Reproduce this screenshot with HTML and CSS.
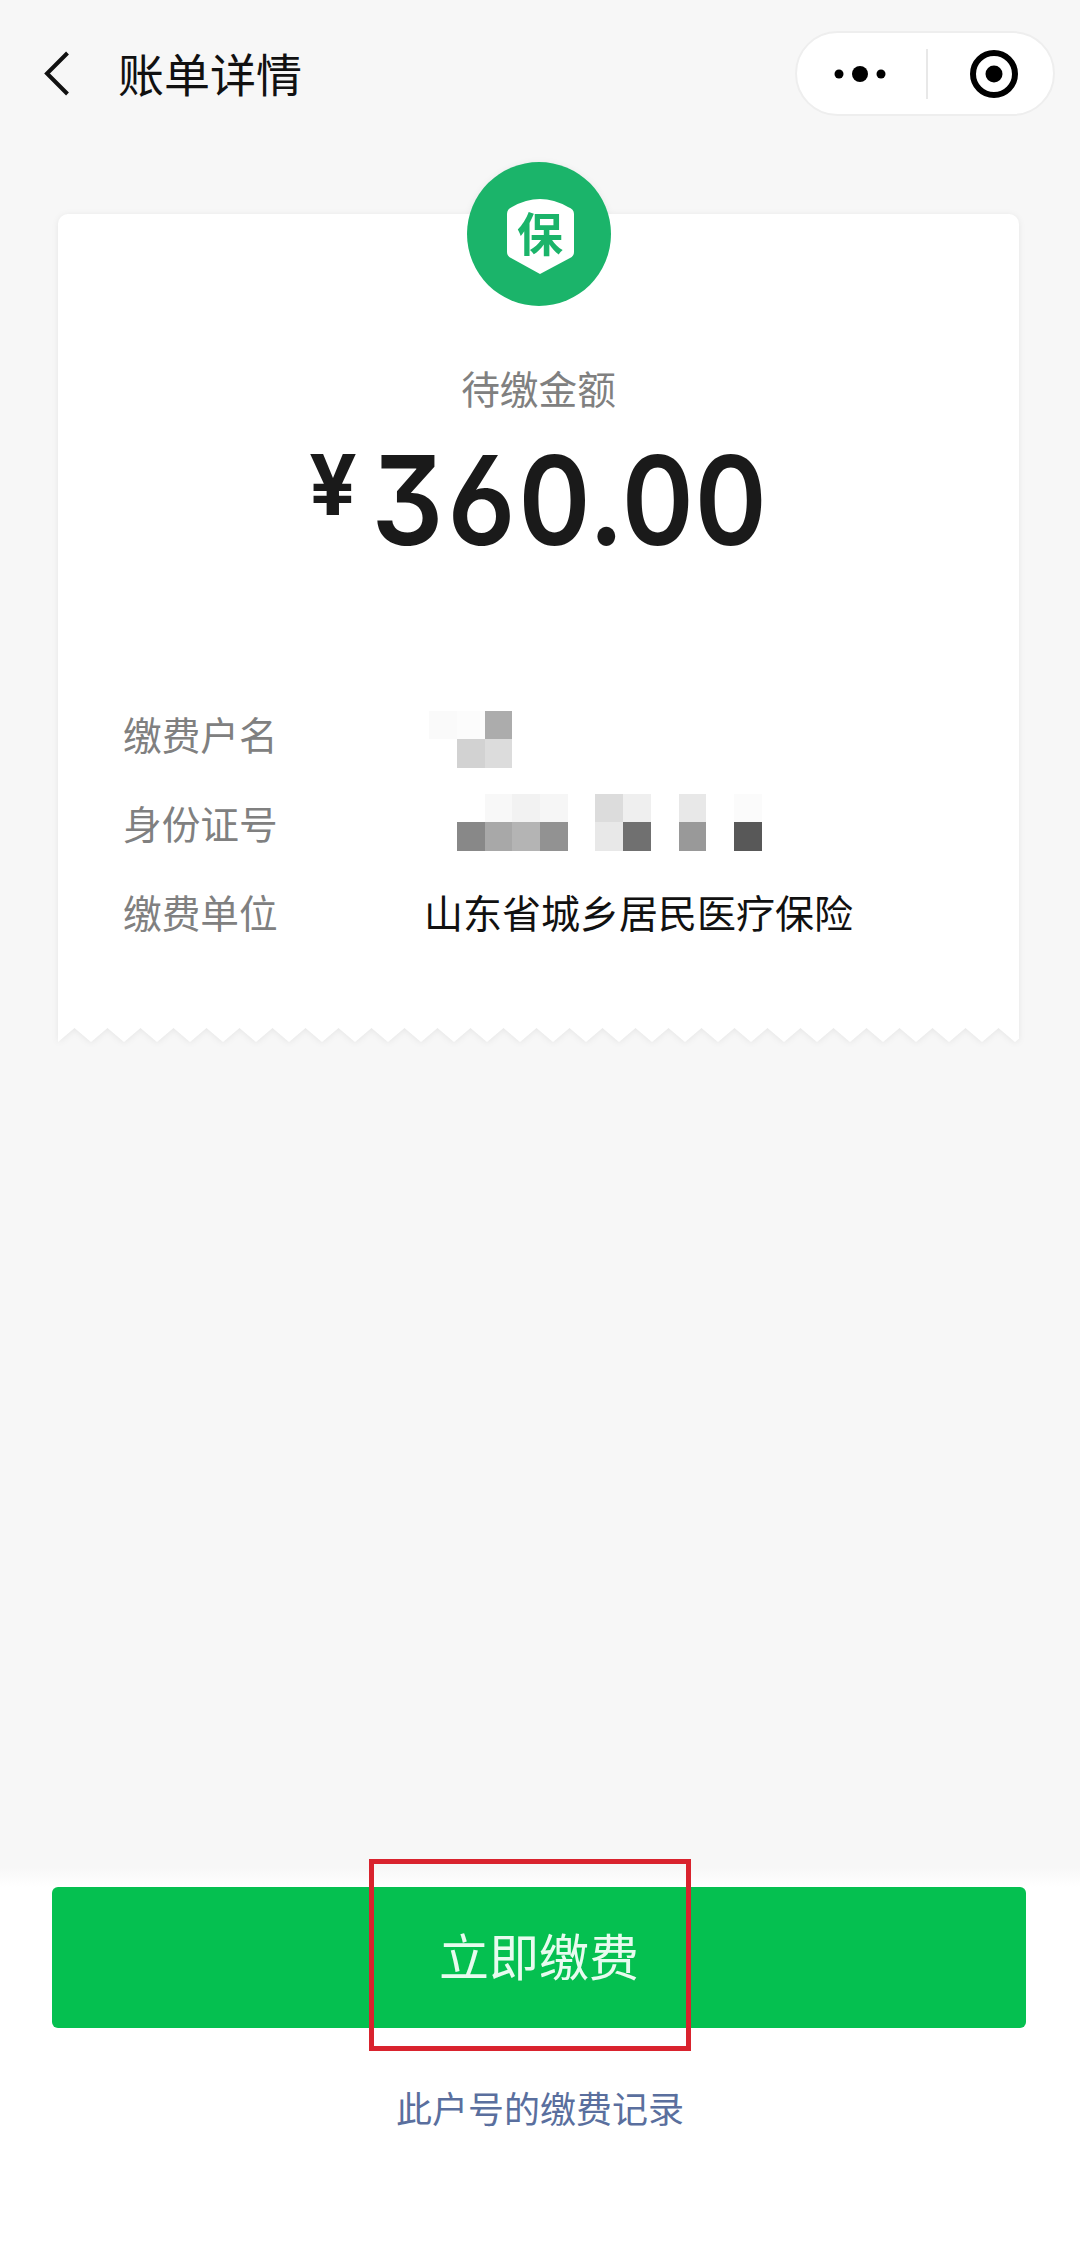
FILE: index.html
```html
<!DOCTYPE html>
<html lang="zh-CN">
<head>
<meta charset="utf-8">
<title>账单详情</title>
<link rel="stylesheet" href="styles.css">
</head>
<body>
<div class="page">
  <header class="nav">
    <svg class="back" width="26" height="45" viewBox="0 0 26 45"><path d="M23.5 2 L3 22.5 L23.5 43" fill="none" stroke="#111" stroke-width="4"/></svg>
    <h1 class="title">账单详情</h1>
    <div class="capsule">
      <svg class="dots" width="54" height="20" viewBox="0 0 54 20"><circle cx="5" cy="10" r="4.5"/><circle cx="26" cy="10" r="8"/><circle cx="47" cy="10" r="4.5"/></svg>
      <span class="capsule-line"></span>
      <svg class="target" width="50" height="50" viewBox="0 0 50 50"><circle cx="25" cy="25" r="21" fill="none" stroke="#000" stroke-width="6"/><circle cx="25" cy="25" r="8.5"/></svg>
    </div>
  </header>

  <main class="bill">
    <section class="card">
      <svg class="logo" width="144" height="144" viewBox="0 0 144 144">
        <circle cx="72" cy="72" r="72" fill="#1bb46a"/>
        <path d="M45 45 Q73 29 101 45 Q107 47 107 52 L107 90 Q107 94 103 96 L73 112 L44 96 Q40 94 40 90 L40 52 Q40 47 45 45 Z" fill="#fff"/>
        <text class="logo-char" x="73" y="89" text-anchor="middle">保</text>
      </svg>
      <div class="due-label">待缴金额</div>
      <div class="amount"><span class="currency">¥</span><span class="digits">360.00</span></div>
      <dl class="rows">
        <div class="row">
          <dt>缴费户名</dt>
          <dd>
            <svg class="mosaic mosaic-name" width="334" height="58" viewBox="0 0 334 58">
              <rect x="0" width="28" height="28" fill="#fafafa"/><rect x="28" width="28" height="28" fill="#fcfcfc"/><rect x="56" width="27" height="28" fill="#acacac"/>
              <rect x="28" y="28" width="28" height="29" fill="#d2d2d2"/><rect x="56" y="28" width="27" height="29" fill="#dcdcdc"/>
            </svg>
          </dd>
        </div>
        <div class="row">
          <dt>身份证号</dt>
          <dd>
            <svg class="mosaic mosaic-id" width="334" height="58" viewBox="0 0 334 58">
              <rect x="56" width="28" height="28" fill="#f8f8f8"/><rect x="83" width="28" height="28" fill="#f2f2f2"/><rect x="111" width="28" height="28" fill="#f6f6f6"/>
              <rect x="166" width="28" height="28" fill="#dcdcdc"/><rect x="194" width="28" height="28" fill="#efefef"/><rect x="250" width="27" height="28" fill="#e8e8e8"/><rect x="305" width="28" height="28" fill="#fbfbfb"/>
              <rect x="28" y="28" width="28" height="29" fill="#888"/><rect x="56" y="28" width="27" height="29" fill="#a8a8a8"/><rect x="83" y="28" width="28" height="29" fill="#b4b4b4"/><rect x="111" y="28" width="28" height="29" fill="#929292"/>
              <rect x="166" y="28" width="28" height="29" fill="#e8e8e8"/><rect x="194" y="28" width="28" height="29" fill="#707070"/><rect x="250" y="28" width="27" height="29" fill="#999"/><rect x="305" y="28" width="28" height="29" fill="#585858"/>
            </svg>
          </dd>
        </div>
        <div class="row">
          <dt>缴费单位</dt>
          <dd class="org">山东省城乡居民医疗保险</dd>
        </div>
      </dl>
    </section>
    <svg class="zigzag" width="961" height="16" viewBox="0 0 961 16">
      <defs><pattern id="tooth" width="33" height="16" patternUnits="userSpaceOnUse"><path d="M0 14 L16.5 0 L33 14 V0 H0 Z" fill="#fff"/></pattern></defs>
      <rect width="961" height="16" fill="url(#tooth)"/>
    </svg>
  </main>

  <footer class="footer">
    <div class="pay-wrap">
      <button class="pay" type="button">立即缴费</button>
      <span class="mark"></span>
    </div>
    <a class="history">此户号的缴费记录</a>
  </footer>
</div>
</body>
</html>
```

FILE: styles.css
```css
* { box-sizing: border-box; }
html, body { margin: 0; padding: 0; }
body { font-family: "Noto Sans CJK SC", "Noto Sans", sans-serif; background: #fff; }

.page {
  width: 1080px;
  height: 2253px;
  display: flex;
  flex-direction: column;
  background: #f7f7f7;
  overflow: hidden;
}

/* nav */
.nav {
  height: 146px;
  padding: 31px 25px 0 44px;
  display: flex;
  align-items: flex-start;
}
.back { margin-top: 20px; flex: none; }
.title {
  margin: 0 0 0 48px;
  font-size: 46px;
  font-weight: 400;
  line-height: 82px;
  color: #111;
  white-space: nowrap;
}
.capsule {
  margin-left: auto;
  width: 260px;
  height: 85px;
  border: 2px solid #eeeeee;
  border-radius: 43px;
  background: #fff;
  display: flex;
  align-items: center;
  padding-left: 37px;
}
.dots { flex: none; }
.capsule-line { width: 2px; height: 50px; background: #e8e8e8; margin-left: 38px; }
.target { flex: none; margin-left: 41px; }

/* bill */
.bill {
  margin: 68px 61px 0 58px;
  display: flex;
  flex-direction: column;
  filter: drop-shadow(0 1px 3px rgba(0,0,0,.07));
}
.card {
  position: relative;
  height: 814px;
  padding-top: 148px;
  background: #fff;
  border-radius: 10px 10px 0 0;
}
.logo { position: absolute; left: 409px; top: -52px; }
.logo-char { font-size: 46px; font-weight: 700; fill: #1bb46a; font-family: "Noto Sans CJK SC", sans-serif; }
.zigzag { display: block; }

.due-label {
  font-size: 38.7px;
  line-height: 50px;
  color: #808080;
  text-align: center;
}
.amount {
  margin-top: 23px;
  padding-left: 251px;
  display: flex;
  align-items: flex-start;
  color: #1a1a1a;
  font-family: Inter, Roboto, sans-serif;
  height: 120px;
}
.currency { flex: none; font-size: 84px; font-weight: 700; line-height: 100px; margin-right: 15px; }
.digits {
  flex: none;
  font-size: 124px;
  font-weight: 600;
  line-height: 130px;
  font-feature-settings: "cv09", "cv03", "tnum";
  transform: scaleX(.91);
  transform-origin: left center;
}

.rows { margin: 133px 0 0 65px; }
.row { display: flex; align-items: center; height: 89px; }
.row dt { width: 306px; font-size: 38.7px; color: #808080; flex: none; }
.row dd { margin: 0; font-size: 38.7px; color: #111; white-space: nowrap; }
.mosaic { display: block; }
.mosaic-name { margin-top: 14px; }
.mosaic-id { margin-top: 2px; }
.row .org { margin-left: -5px; font-size: 39px; }

/* footer */
.footer {
  margin-top: auto;
  height: 386px;
  padding: 20px 54px 0 52px;
  background: linear-gradient(#f7f7f7, #fff 20px);
  display: flex;
  flex-direction: column;
  align-items: center;
}
.pay-wrap { position: relative; width: 974px; }
.pay {
  display: block;
  width: 100%;
  height: 141px;
  padding: 0 0 7px;
  border: 0;
  border-radius: 6px;
  background: #05c050;
  color: #e8fbef;
  font: 400 50px "Noto Sans CJK SC", sans-serif;
}
.mark {
  position: absolute;
  left: 317px;
  top: -28px;
  width: 322px;
  height: 192px;
  border: 5px solid #d9232e;
}
.history {
  margin-top: 55px;
  margin-left: 2px;
  font-size: 36px;
  line-height: 48px;
  color: #5a6f9e;
}
```
